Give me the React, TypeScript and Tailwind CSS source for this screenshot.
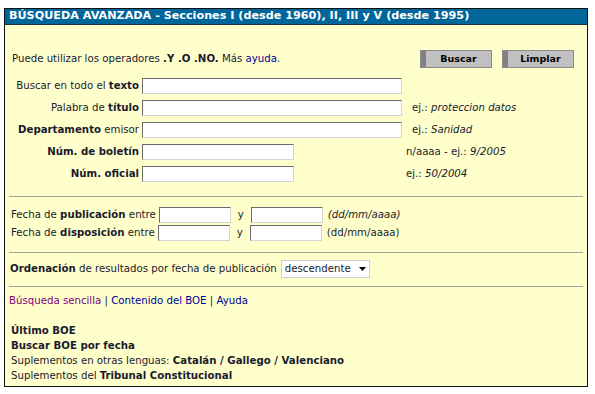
const font = { fontFamily: '"DejaVu Sans", Verdana, sans-serif' }

const rows = [
  { pre: 'Buscar en todo el ', bold: 'texto', post: '', wide: true, hint: null },
  { pre: 'Palabra de ', bold: 'título', post: '', wide: true, hint: ['ej.: ', 'proteccion datos'] },
  { pre: '', bold: 'Departamento', post: ' emisor', wide: true, hint: ['ej.: ', 'Sanidad'] },
  { pre: '', bold: 'Núm. de boletín', post: '', wide: false, hint: ['n/aaaa - ej.: ', '9/2005'] },
  { pre: '', bold: 'Núm. oficial', post: '', wide: false, hint: ['ej.: ', '50/2004'] },
]

function Input({ w }: { w: string }) {
  return <div className={`${w} h-[16px] bg-white border border-t-[#6b6b6b] border-l-[#6b6b6b] border-r-[#d4d4d4] border-b-[#d4d4d4]`} />
}

function Btn({ label }: { label: string }) {
  return (
    <div className="flex h-[18px] w-[72px] border border-[#8a8a8a] bg-[#c0c0c0]">
      <div className="w-[5px] bg-[#808080]" />
      <div className="flex-1 flex items-center justify-center text-[9.5px] font-bold text-black">{label}</div>
    </div>
  )
}

export default function App() {
  return (
    <div className="w-[595px] h-[394px] bg-white pt-[8px] pl-[4px]" style={font}>
      <div className="w-[584px] h-[379px] border border-[#111] bg-[#ffffcc] text-[10.2px] text-[#1a1a2e]">
        <div className="h-[16px] bg-[#006699] border-b border-[#1d3242] pl-[4px] flex items-center text-white font-bold text-[11.2px]">
          BÚSQUEDA AVANZADA - Secciones I (desde 1960), II, III y V (desde 1995)
        </div>

        <div className="flex items-center mt-[25px] pl-[7px] pr-[13px]">
          <div className="flex-1">
            Puede utilizar los operadores <b>.Y .O .NO.</b> Más <span className="text-[#000099]">ayuda</span>.
          </div>
          <div className="flex gap-[10px]">
            <Btn label="Buscar" />
            <Btn label="Limplar" />
          </div>
        </div>

        <div className="mt-[10px] flex flex-col gap-[6px]">
          {rows.map((r, i) => (
            <div key={i} className="flex items-center h-[16px]">
              <div className="w-[137px] text-right pr-[3px] whitespace-nowrap">
                {r.pre}<b>{r.bold}</b>{r.post}
              </div>
              <Input w={r.wide ? 'w-[260px]' : 'w-[152px]'} />
              {r.hint && (
                <div className={r.wide ? 'ml-[10px]' : 'ml-[112px]'}>
                  {r.hint[0]}<i>{r.hint[1]}</i>
                </div>
              )}
            </div>
          ))}
        </div>

        <div className="mx-[4px] mt-[14px] border-t border-[#a0a0a0]" />

        <div className="mt-[10px] pl-[6px] flex flex-col gap-[3px]">
          {[
            ['publicación', true],
            ['disposición', false],
          ].map(([w, it], i) => (
            <div key={i} className="flex items-center h-[15px]">
              <div className="whitespace-nowrap">Fecha de <b>{w as string}</b> entre</div>
              <div className="ml-[3px]"><Input w="w-[72px]" /></div>
              <div className="mx-[7px]">y</div>
              <Input w="w-[72px]" />
              <div className="ml-[5px]">{it ? <i>(dd/mm/aaaa)</i> : '(dd/mm/aaaa)'}</div>
            </div>
          ))}
        </div>

        <div className="mx-[4px] mt-[12px] border-t border-[#a0a0a0]" />

        <div className="mt-[7px] pl-[5px] flex items-center h-[18px]">
          <div className="whitespace-nowrap"><b>Ordenación</b> de resultados por fecha de publicación</div>
          <div className="ml-[4px] w-[89px] h-[18px] bg-white border border-[#d0d0d0] flex items-center justify-between px-[3px]">
            <span>descendente</span>
            <svg width="7" height="4" viewBox="0 0 7 4"><path d="M0 0h7L3.5 4z" fill="#000" /></svg>
          </div>
        </div>

        <div className="mx-[4px] mt-[8px] border-t border-[#a0a0a0]" />

        <div className="mt-[6px] pl-[4px]">
          <span className="text-[#800080]">Búsqueda sencilla</span> | <span className="text-[#000099]">Contenido del BOE</span> | <span className="text-[#000099]">Ayuda</span>
        </div>

        <div className="mt-[15px] pl-[6px] leading-[15px]">
          <div className="font-bold">Último BOE</div>
          <div className="font-bold">Buscar BOE por fecha</div>
          <div>Suplementos en otras lenguas: <b>Catalán / Gallego / Valenciano</b></div>
          <div>Suplementos del <b>Tribunal Constitucional</b></div>
        </div>
      </div>
    </div>
  )
}
